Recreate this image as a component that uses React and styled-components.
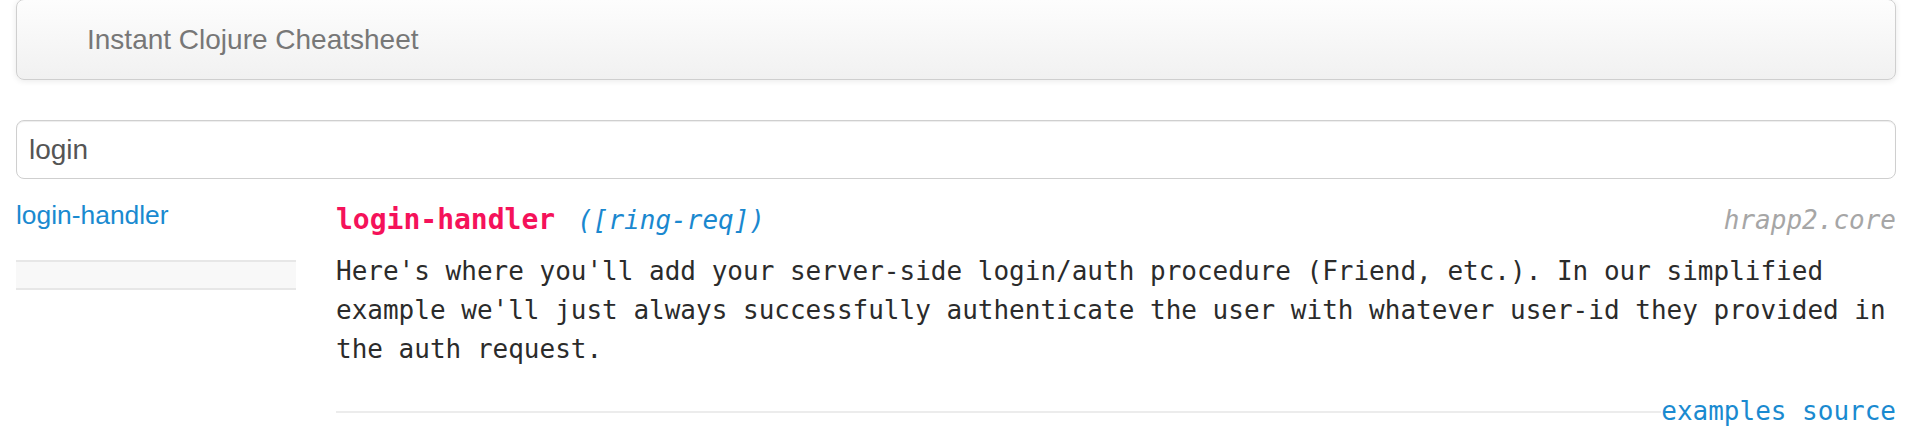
import React from 'react';
import styled, { createGlobalStyle } from 'styled-components';

// --- palette taken from the cheatsheet page ---
const colors = {
  pageBg: '#ffffff',
  navTop: '#fdfdfd',
  navBottom: '#f1f1f1',
  border: '#cfcfcf',
  brand: '#777777',
  inputText: '#555555',
  link: '#1a8ad0',
  fnName: '#f5125a',
  args: '#1a88cf',
  ns: '#a6a6a6',
  body: '#2b2b2b',
  rule: '#ececec',
  blockBg: '#f8f8f8',
  blockBorder: '#e7e7e7',
};

const sans = '"Liberation Sans", Arial, Helvetica, sans-serif';
const mono = '"DejaVu Sans Mono", "Liberation Mono", monospace';

const GlobalStyle = createGlobalStyle`
  html, body {
    margin: 0;
    padding: 0;
    background: ${colors.pageBg};
    overflow: hidden;
  }
  body {
    font-family: ${sans};
  }
`;

const Page = styled.div`
  padding: 0 20px 0 16px;
`;

const Navbar = styled.div`
  box-sizing: border-box;
  height: 81px;
  margin-top: -1px;
  display: flex;
  align-items: center;
  padding-left: 70px;
  border: 1px solid ${colors.border};
  border-radius: 8px;
  background: linear-gradient(to bottom, ${colors.navTop}, ${colors.navBottom});
  box-shadow: 0 1px 6px rgba(0, 0, 0, 0.09);
`;

const Brand = styled.span`
  font-family: ${sans};
  font-size: 28px;
  color: ${colors.brand};
`;

const Search = styled.input`
  box-sizing: border-box;
  display: block;
  width: 100%;
  height: 59px;
  margin-top: 40px;
  padding: 0 12px;
  border: 1px solid ${colors.border};
  border-radius: 8px;
  box-shadow: inset 0 1px 1px rgba(0, 0, 0, 0.075);
  font-family: ${sans};
  font-size: 28px;
  color: ${colors.inputText};
  outline: none;
`;

const Layout = styled.div`
  display: flex;
  gap: 40px;
  padding-top: 16px;
`;

const Sidebar = styled.div`
  flex: 0 0 280px;
`;

const SideLink = styled.a`
  display: block;
  font-family: ${sans};
  font-size: 26.4px;
  line-height: 40px;
  color: ${colors.link};
  text-decoration: none;
`;

const SideBlock = styled.div`
  height: 26px;
  margin-top: 25px;
  border-top: 2px solid ${colors.blockBorder};
  border-bottom: 2px solid ${colors.blockBorder};
  background: ${colors.blockBg};
`;

const Main = styled.div`
  flex: 1;
  min-width: 0;
  padding-top: 5px;
`;

const Heading = styled.div`
  display: flex;
  align-items: baseline;
  justify-content: space-between;
  line-height: 40px;
  font-family: ${mono};
`;

const Signature = styled.div`
  display: flex;
  align-items: baseline;
  gap: 22px;
`;

const FnName = styled.span`
  font-size: 28px;
  font-weight: 700;
  color: ${colors.fnName};
`;

const Italic = styled.span`
  font-size: 26px;
  font-style: italic;
  color: ${({ tone }) => tone};
`;

const Doc = styled.p`
  margin: 12px 0 0;
  font-family: ${mono};
  font-size: 26px;
  line-height: 39px;
  color: ${colors.body};
`;

const Footer = styled.div`
  display: flex;
  align-items: center;
  margin-top: 23px;
  line-height: 39px;
`;

const Rule = styled.div`
  flex: 1;
  height: 2px;
  background: ${colors.rule};
`;

const FooterLinks = styled.div`
  display: flex;
  gap: 15.6px;
  font-family: ${mono};
  font-size: 26px;
`;

const MonoLink = styled.a`
  color: ${colors.link};
  text-decoration: none;
`;

const App = () => (
  <Page>
    <GlobalStyle />
    <Navbar>
      <Brand>Instant Clojure Cheatsheet</Brand>
    </Navbar>

    <Search defaultValue="login" />

    <Layout>
      <Sidebar>
        <SideLink href="#login-handler">login-handler</SideLink>
        <SideBlock />
      </Sidebar>

      <Main>
        <Heading>
          <Signature>
            <FnName>login-handler</FnName>
            <Italic tone={colors.args}>([ring-req])</Italic>
          </Signature>
          <Italic tone={colors.ns}>hrapp2.core</Italic>
        </Heading>
        <Doc>
          Here's where you'll add your server-side login/auth procedure (Friend, etc.). In our
          simplified example we'll just always successfully authenticate the user with whatever
          user-id they provided in the auth request.
        </Doc>
        <Footer>
          <Rule />
          <FooterLinks>
            <MonoLink href="#examples">examples</MonoLink>
            <MonoLink href="#source">source</MonoLink>
          </FooterLinks>
        </Footer>
      </Main>
    </Layout>
  </Page>
);

export default App;
